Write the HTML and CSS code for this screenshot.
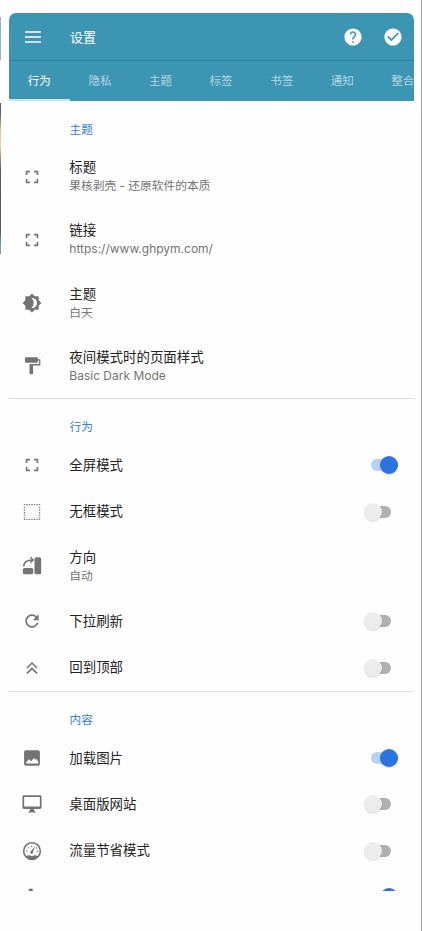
FILE: index.html
```html
<!DOCTYPE html>
<html lang="zh-CN">
<head>
<meta charset="utf-8">
<title>设置</title>
<link rel="stylesheet" href="styles.css">
</head>
<body>
<div class="edge"><div class="edge-bar"></div><div class="edge-photo"></div></div>
<main class="panel">
  <header class="bar">
    <svg class="ic" viewBox="0 0 24 24"><path d="M2.500 19h19v-2H2.500v2zm0-6h19v-2H2.500v2zm0-8v2h19V5H2.500z"/></svg>
    <h1>设置</h1>
    <svg class="ic" viewBox="0 0 24 24"><path d="M12 1.700C6.300 1.700 1.700 6.300 1.700 12S6.300 22.300 12 22.300 22.300 17.700 22.300 12 17.700 1.700 12 1.700zm1 17.300h-2v-2h2v2zm2.070-7.750-.9.920C13.450 12.900 13 13.500 13 15h-2v-.5c0-1.100.450-2.100 1.170-2.830l1.240-1.260c.370-.360.590-.860.590-1.410 0-1.100-.9-2-2-2s-2 .9-2 2H8c0-2.210 1.790-4 4-4s4 1.790 4 4c0 .880-.360 1.680-.930 2.250z"/></svg>
    <svg class="ic done" viewBox="0 0 24 24"><path d="M12 1.700C6.300 1.700 1.700 6.300 1.700 12S6.300 22.300 12 22.300 22.300 17.700 22.300 12 17.700 1.700 12 1.700zm-2 15.300-5-5 1.410-1.410L10 14.170l7.590-7.590L19 8l-9 9z"/></svg>
  </header>
  <nav class="tabs">
    <span class="tab active">行为</span><span class="tab">隐私</span><span class="tab">主题</span><span class="tab">标签</span><span class="tab">书签</span><span class="tab">通知</span><span class="tab">整合</span>
  </nav>
  <section class="first">
    <h2>主题</h2>
    <div class="row tall"><svg class="ic" viewBox="0 0 24 24"><path d="M6.500 14.500h-2v5h5v-2h-3v-3zm-2-5h2v-3h3v-2h-5v5zm13 8h-3v2h5v-5h-2v3zm-3-13v2h3v3h2v-5h-5z"/></svg><div class="label"><b>标题</b><small>果核剥壳 - 还原软件的本质</small></div></div>
    <div class="row tall"><svg class="ic" viewBox="0 0 24 24"><path d="M6.500 14.500h-2v5h5v-2h-3v-3zm-2-5h2v-3h3v-2h-5v5zm13 8h-3v2h5v-5h-2v3zm-3-13v2h3v3h2v-5h-5z"/></svg><div class="label"><b>链接</b><small class="latin">https://www.ghpym.com/</small></div></div>
    <div class="row tall"><svg class="ic" viewBox="0 0 24 24"><path fill-rule="evenodd" d="M20 15.310 23.310 12 20 8.690V4h-4.690L12 .69 8.690 4H4v4.690L.69 12 4 15.310V20h4.690L12 23.310 15.310 20H20v-4.690zM11 18c1-.7 3-2.500 3-6s-2-5.300-3-6c4-.5 7 2.500 7 6s-3 6.500-7 6z"/></svg><div class="label"><b>主题</b><small>白天</small></div></div>
    <div class="row tall"><svg class="ic" viewBox="0 0 24 24"><path d="M19 4V2.500c0-.55-.45-1-1-1H5c-.8 0-1.500.7-1.500 1.500v3.500C3.500 7.300 4.200 8 5 8h13c.55 0 1-.45 1-1V5.500h1.500v4H9V21c0 .55.450 1 1 1h2.300c.55 0 1-.45 1-1v-9.500H22V4h-3z"/></svg><div class="label"><b>夜间模式时的页面样式</b><small class="latin">Basic Dark Mode</small></div></div>
  </section>
  <section>
    <h2>行为</h2>
    <div class="row"><svg class="ic" viewBox="0 0 24 24"><path d="M6.500 14.500h-2v5h5v-2h-3v-3zm-2-5h2v-3h3v-2h-5v5zm13 8h-3v2h5v-5h-2v3zm-3-13v2h3v3h2v-5h-5z"/></svg><div class="label"><b>全屏模式</b></div><i class="switch on"></i></div>
    <div class="row"><svg class="ic" viewBox="0 0 24 24"><path class="dots" d="M2.200 3.200h19.600M2.200 20.800h19.600M3 5.900v13M21 5.900v13"/></svg><div class="label"><b>无框模式</b></div><i class="switch"></i></div>
    <div class="row tall"><svg class="ic" viewBox="0 0 24 24"><rect x="15" y="1.500" width="8" height="20.500" rx="2"/><rect x="1" y="14.500" width="12.500" height="7.500" rx="2"/><path class="line" d="M2 12.500C2 8 5.500 4.800 13 4.800M10 1.500l3.300 3.300L10 8"/></svg><div class="label"><b>方向</b><small>自动</small></div></div>
    <div class="row"><svg class="ic" viewBox="0 0 24 24"><path d="M17.650 6.350C16.200 4.900 14.210 4 12 4c-4.420 0-7.990 3.580-7.990 8s3.570 8 7.990 8c3.730 0 6.840-2.550 7.730-6h-2.080c-.82 2.330-3.040 4-5.650 4-3.310 0-6-2.690-6-6s2.690-6 6-6c1.660 0 3.140.69 4.220 1.780L13 11h7V4l-2.350 2.350z"/></svg><div class="label"><b>下拉刷新</b></div><i class="switch"></i></div>
    <div class="row"><svg class="ic" viewBox="0 0 24 24"><path class="line" d="M6 12l6-6 6 6M6 18.500l6-6 6 6"/></svg><div class="label"><b>回到顶部</b></div><i class="switch"></i></div>
  </section>
  <section>
    <h2>内容</h2>
    <div class="row"><svg class="ic" viewBox="0 0 24 24"><path fill-rule="evenodd" d="M21.500 19V5c0-1.400-.9-2.300-2.300-2.300H4.800C3.400 2.700 2.500 3.600 2.500 5v14c0 1.400.9 2.300 2.300 2.300h14.400c1.400 0 2.300-.9 2.300-2.300zM5 18.500V17l3.500-3.500 2.500 2.500 3.500-4 1.700 2 1-1 2.300 3.500v2z"/></svg><div class="label"><b>加载图片</b></div><i class="switch on"></i></div>
    <div class="row"><svg class="ic" viewBox="0 0 24 24"><path fill-rule="evenodd" d="M2.500 1.500h19c1.100 0 2 .8 2 2V16c0 1.200-.9 2-2 2h-19c-1.100 0-2-.8-2-2V3.500c0-1.200.9-2 2-2zM2.600 3.500V15h18.800V3.500zM10 18h4l1 2.500 2 1.700H7l2-1.700z"/></svg><div class="label"><b>桌面版网站</b></div><i class="switch"></i></div>
    <div class="row"><svg class="ic" viewBox="0 0 24 24"><circle class="line" cx="12" cy="12" r="10"/><path d="M4.500 18.800c2.500-2 5-2 7.500-.6 2.500-1.400 5-1.400 7.500.6-3.500 4.500-11.500 4.500-15 0zM15.500 6.500l-2.300 6.600a1.700 1.700 0 1 1-2.300-1z"/><circle cx="5.800" cy="12" r=".9"/><circle cx="7.600" cy="8" r=".9"/><circle cx="11.500" cy="6.200" r=".9"/><circle cx="17.500" cy="8.500" r=".9"/><circle cx="18.500" cy="12.300" r=".9"/></svg><div class="label"><b>流量节省模式</b></div><i class="switch"></i></div>
    <div class="row"><svg class="ic" viewBox="0 0 24 24"><circle cx="10.500" cy="4.500" r="2.700"/></svg><div class="label"></div><i class="switch on"></i></div>
  </section>
</main>
</body>
</html>
```
FILE: styles.css
```css
* { box-sizing: border-box; }
html { background: #fefefe; }
body {
  margin: 0;
  width: 422px;
  height: 931px;
  overflow: hidden;
  display: flex;
  border-right: 1px solid #999;
  font-family: Inter, "Noto Sans CJK SC", sans-serif;
  color: #242424;
}
.edge { width: 9px; flex: none; padding-top: 17px; }
.edge-bar { width: 1px; height: 43px; background: #8bb9c9; }
.edge-photo {
  width: 1px;
  height: 151px;
  margin-top: 43px;
  background: linear-gradient(#655461 0, #76606a 8%, #e9bd91 18%, #f6d9a0 28%, #b68d80 36%, #66515f 45%, #55535f 85%, #62adb8 94%, #c77880 100%);
}
.panel {
  width: 405px;
  height: 878px;
  margin-top: 13px;
  flex: none;
  overflow: hidden;
  border-radius: 7px 7px 0 0;
  background: #fefefe;
}
.ic { width: 20px; height: 20px; flex: none; fill: #747474; }
.line { fill: none; stroke: #747474; stroke-width: 1.9; }
.dots { fill: none; stroke: #747474; stroke-width: 1.6; stroke-dasharray: 1.6 1.4; }
.bar {
  height: 48px;
  display: flex;
  align-items: center;
  padding: 0 11px 0 13.5px;
  background: #3d95b4;
  border-bottom: 1px solid #2c7f9c;
}
.bar .ic { fill: #fff; }
.bar h1 { flex: 1; margin: 0 0 0 27.5px; font-size: 13px; font-weight: 400; line-height: 20px; color: #fff; }
.bar .done { margin-left: 20.5px; }
.tabs { height: 40px; display: flex; background: #3d95b4; overflow: hidden; }
.tab {
  width: 60.6px;
  flex: none;
  height: 40px;
  text-align: center;
  font-size: 11.5px;
  line-height: 40px;
  color: #b3d6e2;
}
.active { color: #fff; border-bottom: 2px solid #cde3ec; }
section { border-top: 1px solid #dedede; }
section.first { border-top: 0; }
h2 {
  height: 43px;
  margin: 0;
  padding: 18px 0 0 60.5px;
  font-size: 11.7px;
  line-height: 20px;
  font-weight: 400;
  color: #3680e2;
}
.first h2 { height: 44px; padding-top: 19px; }
.row { height: 46.4px; padding: 0 16px 0 13px; display: flex; align-items: center; }
.tall { height: 63.3px; }
.first .row { height: 63.25px; }
.label { flex: 1; margin-left: 27.3px; display: flex; flex-direction: column; white-space: nowrap; }
.label b { font-size: 13.45px; line-height: 19px; font-weight: 400; }
.label small { font-size: 11.75px; line-height: 18px; color: #747474; }
.label .latin { font-size: 12px; }
.switch { position: relative; flex: none; width: 27px; height: 18px; margin-right: 7px; }
.switch::before { content: ""; position: absolute; left: 6px; right: 0; top: 3px; height: 12px; border-radius: 6px; background: #b0b0b0; }
.switch::after { content: ""; position: absolute; left: 0; top: 0; width: 18px; height: 18px; border-radius: 50%; background: #ececec; box-shadow: 0 1px 1px #0002; }
.switch.on { margin-right: 0; }
.switch.on::before { left: 0; background: #b9d1f6; }
.switch.on::after { left: auto; right: 0; background: #2b73df; }
```
